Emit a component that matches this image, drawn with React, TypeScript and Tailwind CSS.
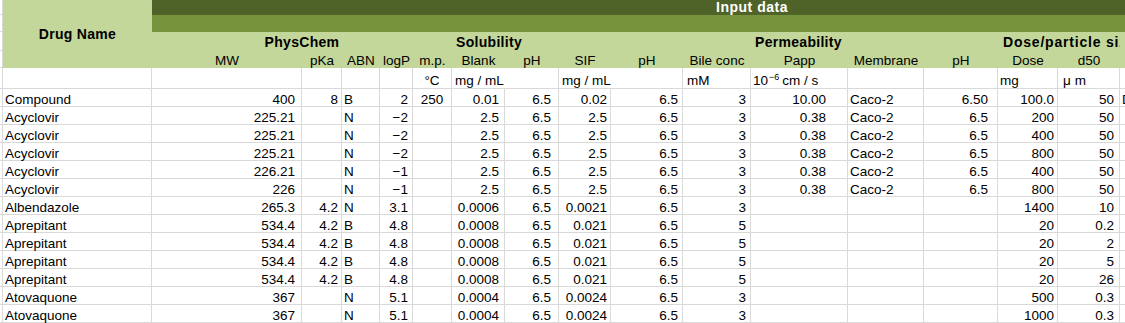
import React from "react";

// One column of the sheet: width, and how its values sit in the cell
interface Col {
  w: string;
  align: string;
  label: string;
}

const cols: Col[] = [
  { w: "w-[150px]", align: "justify-end pr-[6px]", label: "MW" },
  { w: "w-[40px]", align: "justify-end pr-[3px]", label: "pKa" },
  { w: "w-[38px]", align: "justify-start pl-[2px]", label: "ABN" },
  { w: "w-[33px]", align: "justify-end pr-[4px]", label: "logP" },
  { w: "w-[39px]", align: "justify-center", label: "m.p." },
  { w: "w-[53px]", align: "justify-end pr-[5px]", label: "Blank" },
  { w: "w-[54px]", align: "justify-end pr-[7px]", label: "pH" },
  { w: "w-[52px]", align: "justify-end pr-[3px]", label: "SIF" },
  { w: "w-[72px]", align: "justify-end pr-[4px]", label: "pH" },
  { w: "w-[68px]", align: "justify-end pr-[4px]", label: "Bile conc" },
  { w: "w-[97px]", align: "justify-end pr-[21px]", label: "Papp" },
  { w: "w-[76px]", align: "justify-start pl-[2px]", label: "Membrane" },
  { w: "w-[74px]", align: "justify-end pr-[9px]", label: "pH" },
  { w: "w-[60px]", align: "justify-end pr-[3px]", label: "Dose" },
  { w: "w-[62px]", align: "justify-end pr-[5px]", label: "d50" },
  { w: "w-[60px]", align: "justify-start pl-[2px]", label: "" },
];

const acy = (mw: string, logP: string, dose: string): string[] => [
  "Acyclovir", mw, "", "N", logP, "", "2.5", "6.5", "2.5", "6.5", "3", "0.38", "Caco-2", "6.5", dose, "50", "",
];

const aprep = (d50: string): string[] => [
  "Aprepitant", "534.4", "4.2", "B", "4.8", "", "0.0008", "6.5", "0.021", "6.5", "5", "", "", "", "20", d50, "",
];

const atov = (dose: string): string[] => [
  "Atovaquone", "367", "", "N", "5.1", "", "0.0004", "6.5", "0.0024", "6.5", "3", "", "", "", dose, "0.3", "",
];

const rows: string[][] = [
  ["Compound", "400", "8", "B", "2", "250", "0.01", "6.5", "0.02", "6.5", "3", "10.00", "Caco-2", "6.50", "100.0", "50", "D"],
  acy("225.21", "−2", "200"),
  acy("225.21", "−2", "400"),
  acy("225.21", "−2", "800"),
  acy("226.21", "−1", "400"),
  acy("226", "−1", "800"),
  ["Albendazole", "265.3", "4.2", "N", "3.1", "", "0.0006", "6.5", "0.0021", "6.5", "3", "", "", "", "1400", "10", ""],
  aprep("0.2"),
  aprep("2"),
  aprep("5"),
  aprep("26"),
  atov("500"),
  atov("1000"),
];

const grid = "border-r border-b border-[#d9d9d9]";

const Strip = ({ h }: { h: string }) => (
  <div className={`w-[3px] shrink-0 bg-white ${h} ${grid} border-[#c6c6c6]`} />
);

export default function App() {
  return (
    <div className="w-[1125px] h-[323px] overflow-hidden bg-white text-black text-[13.5px] font-['Liberation_Sans','Noto_Sans_CJK_JP',sans-serif]">
      {/* Header block */}
      <div className="flex">
        <div className="flex flex-col">
          <Strip h="h-[15px]" />
          <Strip h="h-[17px]" />
          <Strip h="h-[19px]" />
          <Strip h="h-[17px]" />
        </div>
        <div className="w-[149px] h-[68px] shrink-0 bg-[#c4d79b] flex items-center justify-center font-bold text-[14px] tracking-[0.3px]">
          Drug Name
        </div>
        <div className="flex flex-col">
          <div className="h-[15px] w-[1200px] bg-[#4f6228] text-white font-bold text-[14px] tracking-[0.5px] leading-[15px] text-center">
            Input data
          </div>
          <div className="h-[17px] w-[1200px] bg-[#77933c]" />
          <div className="h-[19px] flex bg-[#c4d79b] font-bold text-[14px] tracking-[0.3px] leading-[21px]">
            <div className="w-[300px] shrink-0 text-center">PhysChem</div>
            <div className="w-[299px] shrink-0 pl-[4px]">Solubility</div>
            <div className="w-[247px] shrink-0 pl-[4px]">Permeability</div>
            <div className="w-[122px] shrink-0 pl-[5px] overflow-hidden whitespace-nowrap tracking-[0.8px]">
              Dose/particle size
            </div>
            <div className="w-[60px] shrink-0" />
          </div>
          <div className="h-[17px] flex bg-[#c4d79b] leading-[20px]">
            {cols.map((c, i) => (
              <div key={i} className={`${c.w} shrink-0 text-center whitespace-nowrap`}>
                {c.label}
              </div>
            ))}
          </div>
        </div>
      </div>

      {/* Units row */}
      <div className="flex h-[21px] leading-[25px]">
        <Strip h="h-[21px]" />
        <div className={`w-[149px] shrink-0 ${grid}`} />
        <div className={`w-[150px] shrink-0 ${grid}`} />
        <div className={`w-[40px] shrink-0 ${grid}`} />
        <div className={`w-[38px] shrink-0 ${grid}`} />
        <div className={`w-[33px] shrink-0 ${grid}`} />
        <div className={`w-[39px] shrink-0 text-center ${grid}`}>°C</div>
        <div className={`w-[107px] shrink-0 pl-[3px] ${grid}`}>mg / mL</div>
        <div className={`w-[124px] shrink-0 pl-[3px] ${grid}`}>mg / mL</div>
        <div className={`w-[68px] shrink-0 pl-[4px] ${grid}`}>mM</div>
        <div className={`w-[97px] shrink-0 pl-[2px] whitespace-nowrap ${grid}`}>
          10<span className="relative -top-[5px] text-[9px] ml-[1px] mr-[3px]">−6</span>cm / s
        </div>
        <div className={`w-[76px] shrink-0 ${grid}`} />
        <div className={`w-[74px] shrink-0 ${grid}`} />
        <div className={`w-[60px] shrink-0 pl-[2px] ${grid}`}>mg</div>
        <div className={`w-[62px] shrink-0 pl-[5px] ${grid}`}>
          <span className="mr-[4px]">μ</span>m
        </div>
        <div className={`w-[60px] shrink-0 ${grid}`} />
      </div>

      {/* Data rows */}
      {rows.map((r, ri) => (
        <div key={ri} className="flex h-[18px] leading-[22px]">
          <Strip h="h-[18px]" />
          <div className={`w-[149px] shrink-0 pl-[2px] whitespace-nowrap ${grid}`}>{r[0]}</div>
          {cols.map((c, ci) => (
            <div
              key={ci}
              className={`${c.w} shrink-0 flex whitespace-nowrap overflow-hidden ${c.align} ${grid}`}
            >
              {r[ci + 1]}
            </div>
          ))}
        </div>
      ))}
    </div>
  );
}
